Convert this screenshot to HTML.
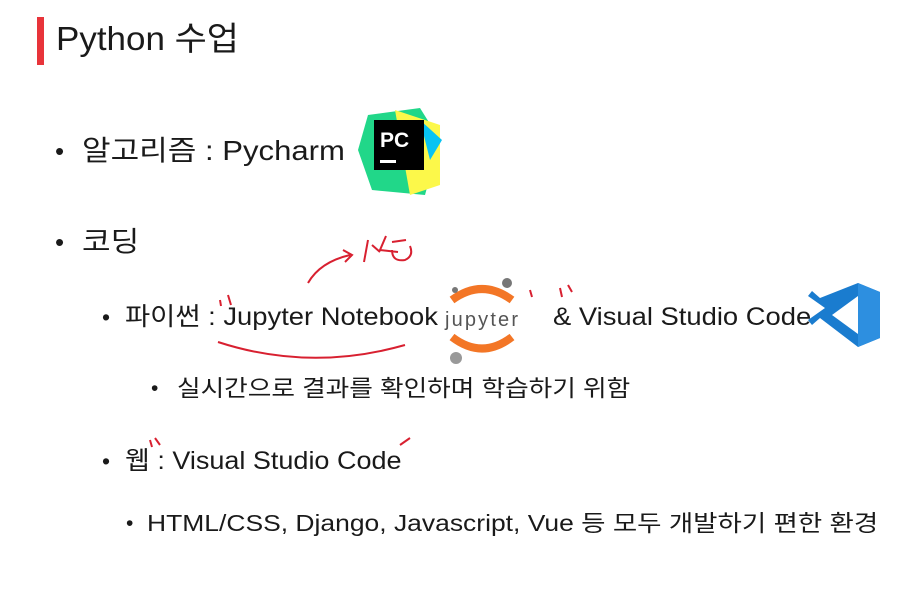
<!DOCTYPE html><html><head><meta charset="utf-8"><style>
body{margin:0;width:924px;height:598px;background:#fff;position:relative;overflow:hidden;font-family:"Liberation Sans","Noto Sans CJK KR",sans-serif;color:#1a1a1a}
.t{position:absolute;white-space:nowrap;line-height:1;transform-origin:left center}
</style></head><body>
<div style="position:absolute;left:37px;top:17px;width:7px;height:48px;background:#e8343a"></div>
<div class="t" style="left:56px;top:22px;font-size:33px;transform:scaleX(1.06)">Python 수업</div>
<div class="t" style="left:55px;top:138px;font-size:26px">•</div>
<div class="t" style="left:82px;top:137px;font-size:28px;transform:scaleX(1.11)">알고리즘 : Pycharm</div>
<div class="t" style="left:55px;top:229px;font-size:26px">•</div>
<div class="t" style="left:82px;top:228px;font-size:28px;transform:scaleX(1.11)">코딩</div>
<div class="t" style="left:102px;top:306px;font-size:23px">•</div>
<div class="t" style="left:125px;top:305px;font-size:25px;transform:scaleX(1.095)">파이썬 : Jupyter Notebook</div>
<div class="t" style="left:553px;top:305px;font-size:25px;transform:scaleX(1.095)">&amp; Visual Studio Code</div>
<div class="t" style="left:151px;top:378px;font-size:21px">•</div>
<div class="t" style="left:177px;top:377px;font-size:23px;transform:scaleX(1.115)">실시간으로 결과를 확인하며 학습하기 위함</div>
<div class="t" style="left:102px;top:450px;font-size:23px">•</div>
<div class="t" style="left:125px;top:449px;font-size:25px;transform:scaleX(1.08)">웹 : Visual Studio Code</div>
<div class="t" style="left:126px;top:513px;font-size:21px">•</div>
<div class="t" style="left:147px;top:512px;font-size:23px;transform:scaleX(1.15)">HTML/CSS, Django, Javascript, Vue 등 모두 개발하기 편한 환경</div>
<svg width="924" height="598" style="position:absolute;left:0;top:0">
<polygon points="368,115 420,108 440,140 425,195 372,190 358,150" fill="#21d789"/>
<polygon points="395,110 440,125 440,185 410,195" fill="#fcf84a"/>
<polygon points="420,120 442,140 430,160" fill="#07c3f2"/>
<rect x="374" y="120" width="50" height="50" fill="#000"/>
<text x="380" y="147" font-family="Liberation Sans" font-weight="bold" font-size="21" fill="#fff">PC</text>
<rect x="380" y="160" width="16" height="3" fill="#fff"/>
<path d="M452,300 Q482,278 512,300" stroke="#f37626" stroke-width="8" fill="none"/>
<path d="M452,337 Q482,360 512,337" stroke="#f37626" stroke-width="8" fill="none"/>
<text x="445" y="326" font-family="Liberation Sans" font-size="20" fill="#555" textLength="73">jupyter</text>
<circle cx="507" cy="283" r="5" fill="#777"/><circle cx="455" cy="290" r="3" fill="#777"/><circle cx="456" cy="358" r="6" fill="#999"/>
<polygon points="858,283 880,292 880,338 858,347 820,318 812,325 808,320 825,308 808,296 812,291 820,298" fill="#1a7ccf"/>
<polygon points="858,296 858,334 832,315" fill="#fff"/>
<polygon points="858,283 880,292 880,338 858,347" fill="#2d8fe0"/>
<g stroke="#d82030" stroke-width="2" fill="none">
<path d="M218,342 Q310,372 405,345"/>
<path d="M308,283 Q320,262 350,255 M343,250 L352,255 L345,262"/>
<path d="M368,240 L364,262 M372,245 L380,252 M386,236 L380,250 L398,252 M392,242 L406,240 M392,250 Q392,262 405,260 Q414,256 410,246"/>
<path d="M220,300 L221,306 M228,295 L231,305"/>
<path d="M530,290 L532,297 M560,288 L562,297 M568,285 L572,292"/>
<path d="M150,440 L152,447 M155,438 L160,445 M400,445 L410,438"/>
</g>
</svg>
</body></html>
